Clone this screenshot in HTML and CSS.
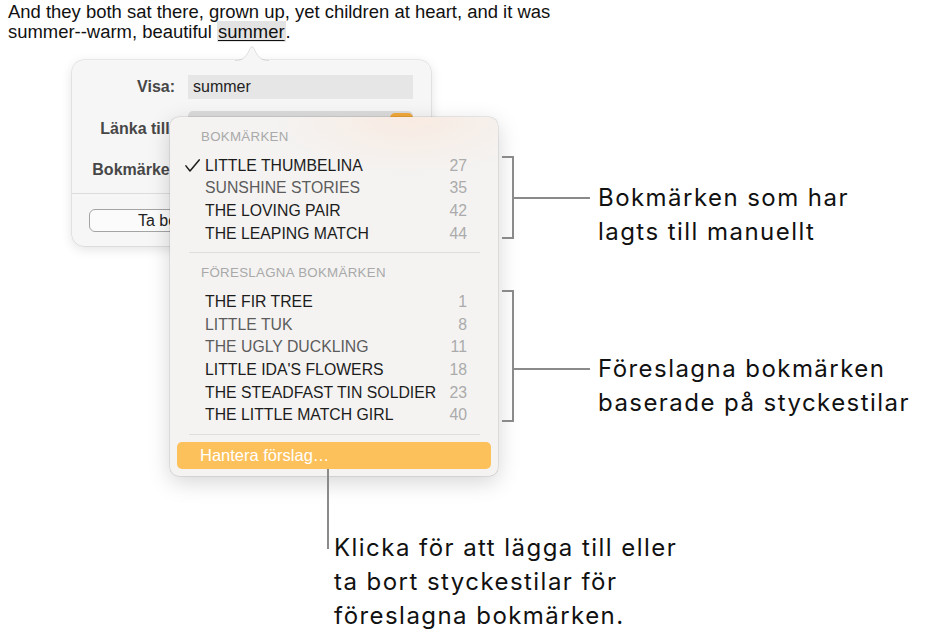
FILE: index.html
```html
<!DOCTYPE html>
<html lang="sv">
<head>
<meta charset="utf-8">
<title>Bokmärken</title>
<link rel="stylesheet" href="styles.css">
</head>
<body>
<div class="page">
  <p class="story">And they both sat there, grown up, yet children at heart, and it was<br>summer--warm, beautiful <span class="hl">summer</span>.</p>

  <div class="popover">
    <svg class="arrow" width="34" height="17" viewBox="0 0 34 17">
      <path d="M0 17 C7 17 10 14 13 8.5 L15.2 4.2 C16.2 2.3 17.8 2.3 18.8 4.2 L21 8.5 C24 14 27 17 34 17 Z" fill="#f6f6f6"/>
      <path d="M0 16.5 C7 16.5 10 14 13 8.5 L15.2 4.2 C16.2 2.3 17.8 2.3 18.8 4.2 L21 8.5 C24 14 27 16.5 34 16.5" fill="none" stroke="rgba(0,0,0,0.13)" stroke-width="0.8"/>
    </svg>
    <div class="form">
      <div class="row r1"><span class="lbl">Visa:</span><div class="field">summer</div></div>
      <div class="row r2"><span class="lbl">Länka till:</span><div class="field popup"><span class="popbtn"></span></div></div>
      <div class="row r3"><span class="lbl">Bokmärke:</span></div>
    </div>
    <div class="sep"></div>
    <div class="btnrow"><button class="btn"><span class="btn-label">Ta bort bokmärke</span></button></div>
  </div>

  <div class="menu">
    <div class="mhead">BOKMÄRKEN</div>
    <div class="item"><span class="check"><svg width="15" height="13" viewBox="0 0 15 13"><path d="M0.9 6.9 L5 12 L14.2 0.9" fill="none" stroke="#1c1c1c" stroke-width="1.5" stroke-linecap="round" stroke-linejoin="round"/></svg></span><span class="name">LITTLE THUMBELINA</span><span class="num">27</span></div>
    <div class="item dim"><span class="check"></span><span class="name">SUNSHINE STORIES</span><span class="num">35</span></div>
    <div class="item"><span class="check"></span><span class="name">THE LOVING PAIR</span><span class="num">42</span></div>
    <div class="item"><span class="check"></span><span class="name">THE LEAPING MATCH</span><span class="num">44</span></div>
    <div class="mdiv"></div>
    <div class="mhead">FÖRESLAGNA BOKMÄRKEN</div>
    <div class="item"><span class="check"></span><span class="name">THE FIR TREE</span><span class="num">1</span></div>
    <div class="item dim"><span class="check"></span><span class="name">LITTLE TUK</span><span class="num">8</span></div>
    <div class="item dim"><span class="check"></span><span class="name">THE UGLY DUCKLING</span><span class="num">11</span></div>
    <div class="item"><span class="check"></span><span class="name">LITTLE IDA'S FLOWERS</span><span class="num">18</span></div>
    <div class="item"><span class="check"></span><span class="name">THE STEADFAST TIN SOLDIER</span><span class="num">23</span></div>
    <div class="item"><span class="check"></span><span class="name">THE LITTLE MATCH GIRL</span><span class="num">40</span></div>
    <div class="mdiv"></div>
    <div class="hantera">Hantera förslag…</div>
  </div>

  <div class="bracket b1"></div>
  <div class="arm a1"></div>
  <div class="bracket b2"></div>
  <div class="arm a2"></div>
  <div class="vline"></div>

  <div class="callout c1">Bokmärken som har<br>lagts till manuellt</div>
  <div class="callout c2">Föreslagna bokmärken<br>baserade på styckestilar</div>
  <div class="callout c3">Klicka för att lägga till eller<br>ta bort styckestilar för<br>föreslagna bokmärken.</div>
</div>
</body>
</html>
```

FILE: styles.css
```css
body {
  margin: 0;
  background: #ffffff;
  font-family: "Liberation Sans", Arial, sans-serif;
}

.page {
  position: relative;
  width: 926px;
  height: 643px;
  overflow: hidden;
}

.story {
  margin: 0;
  padding: 2px 8px 0;
  font-size: 18.45px;
  line-height: 19.7px;
  color: #111111;
}

.hl {
  background: #e3e3e3;
  text-decoration: underline;
  text-decoration-thickness: 1.3px;
  text-underline-offset: 2px;
  padding: 0 1px;
}

/* Link popover */
.popover {
  position: absolute;
  left: 72px;
  top: 60px;
  width: 359px;
  height: 186px;
  box-sizing: border-box;
  padding-top: 15px;
  background: #f6f6f6;
  border-radius: 12px;
  box-shadow: 0 0 0 0.5px rgba(0, 0, 0, 0.13), 0 3px 12px rgba(0, 0, 0, 0.12);
}

.arrow {
  position: absolute;
  left: 163px;
  top: -16px;
  display: block;
}

.form {
  display: flex;
  flex-direction: column;
}

.row {
  display: flex;
  align-items: center;
  column-gap: 13px;
}

.lbl {
  width: 103px;
  flex: none;
  text-align: right;
  font-weight: bold;
  font-size: 16px;
  color: #474747;
  white-space: nowrap;
}

.field {
  width: 225px;
  height: 24px;
  box-sizing: border-box;
  padding-left: 5px;
  background: #e6e6e6;
  font-size: 16px;
  line-height: 24px;
  color: #222222;
}

.r1 { height: 24px; }

.r2 {
  height: 36px;
  margin-top: 12px;
}

.popup {
  position: relative;
  height: 36px;
  background: #dcdcdc;
  border-radius: 5px;
}

.popbtn {
  position: absolute;
  right: 0;
  top: 1.5px;
  width: 23px;
  height: 22px;
  border-radius: 5px;
  background: #f2a93b;
}

.r3 { height: 42px; }

.r3 .lbl { margin-top: 4px; }

.sep {
  height: 1px;
  margin-top: 4px;
  background: #dcdcdc;
}

.btnrow {
  padding: 14.5px 0 0 17px;
}

.btn {
  display: block;
  width: 325px;
  height: 23px;
  box-sizing: border-box;
  border: 1px solid #a4a4a4;
  border-radius: 6px;
  background: #fbfbfb;
  font-family: "Liberation Sans", Arial, sans-serif;
  font-size: 16px;
  color: #222222;
  text-align: left;
  padding: 0 0 0 48px;
}

.btn-label {
  display: inline-block;
  width: 32px;
  overflow: hidden;
  white-space: nowrap;
  vertical-align: top;
  line-height: 21px;
}

/* Bookmark menu */
.menu {
  position: absolute;
  left: 170px;
  top: 117px;
  width: 328px;
  height: 359px;
  box-sizing: border-box;
  padding: 0 7px 7px;
  display: flex;
  flex-direction: column;
  background: radial-gradient(ellipse 140px 60px at 240px 0px, rgba(252, 228, 212, 0.55), rgba(252, 228, 212, 0)), #f4f3f2;
  border-radius: 9px;
  box-shadow: 0 0 0 0.5px rgba(0, 0, 0, 0.14), 0 6px 22px rgba(0, 0, 0, 0.17);
}

.mhead {
  height: 23px;
  padding: 8px 0 0 24px;
  margin-bottom: 6.4px;
  line-height: 23px;
  font-size: 13.3px;
  letter-spacing: 0.3px;
  color: #a9a9a9;
}

.item {
  display: flex;
  align-items: center;
  height: 22.7px;
  padding: 0 24px 0 8px;
  font-size: 15.8px;
  color: #1c1c1c;
}

.check {
  width: 20px;
  flex: none;
  display: flex;
  align-items: center;
}

.check svg { display: block; }

.name { flex: 1; white-space: nowrap; }

.num { color: #ababab; }

.dim .name { color: #5c5c5c; }

.mdiv {
  height: 1px;
  margin: 7px 11px 0 12px;
  background: #dedede;
}

.hantera {
  margin-top: 7px;
  height: 27.3px;
  padding-left: 23px;
  border-radius: 5px;
  background: #fdc15b;
  color: #ffffff;
  font-size: 16.5px;
  line-height: 27.3px;
}

/* Callout lines */
.bracket {
  position: absolute;
  left: 502px;
  width: 12px;
  box-sizing: border-box;
  border: 2px solid #8a8a8a;
  border-left: none;
}

.b1 { top: 156px; height: 83px; }
.b2 { top: 290px; height: 132px; }

.arm {
  position: absolute;
  left: 512px;
  width: 78px;
  height: 2px;
  background: #8a8a8a;
}

.a1 { top: 197px; }
.a2 { top: 368px; }

.vline {
  position: absolute;
  left: 327px;
  top: 469px;
  width: 2px;
  height: 80px;
  background: #8a8a8a;
}

.callout {
  position: absolute;
  font-family: Inter, "Liberation Sans", sans-serif;
  font-size: 24px;
  letter-spacing: 1.45px;
  line-height: 34px;
  color: #111111;
  white-space: nowrap;
}

.c1 { left: 598px; top: 181px; }
.c2 { left: 598px; top: 352px; }
.c3 { left: 334px; top: 531px; }
```
